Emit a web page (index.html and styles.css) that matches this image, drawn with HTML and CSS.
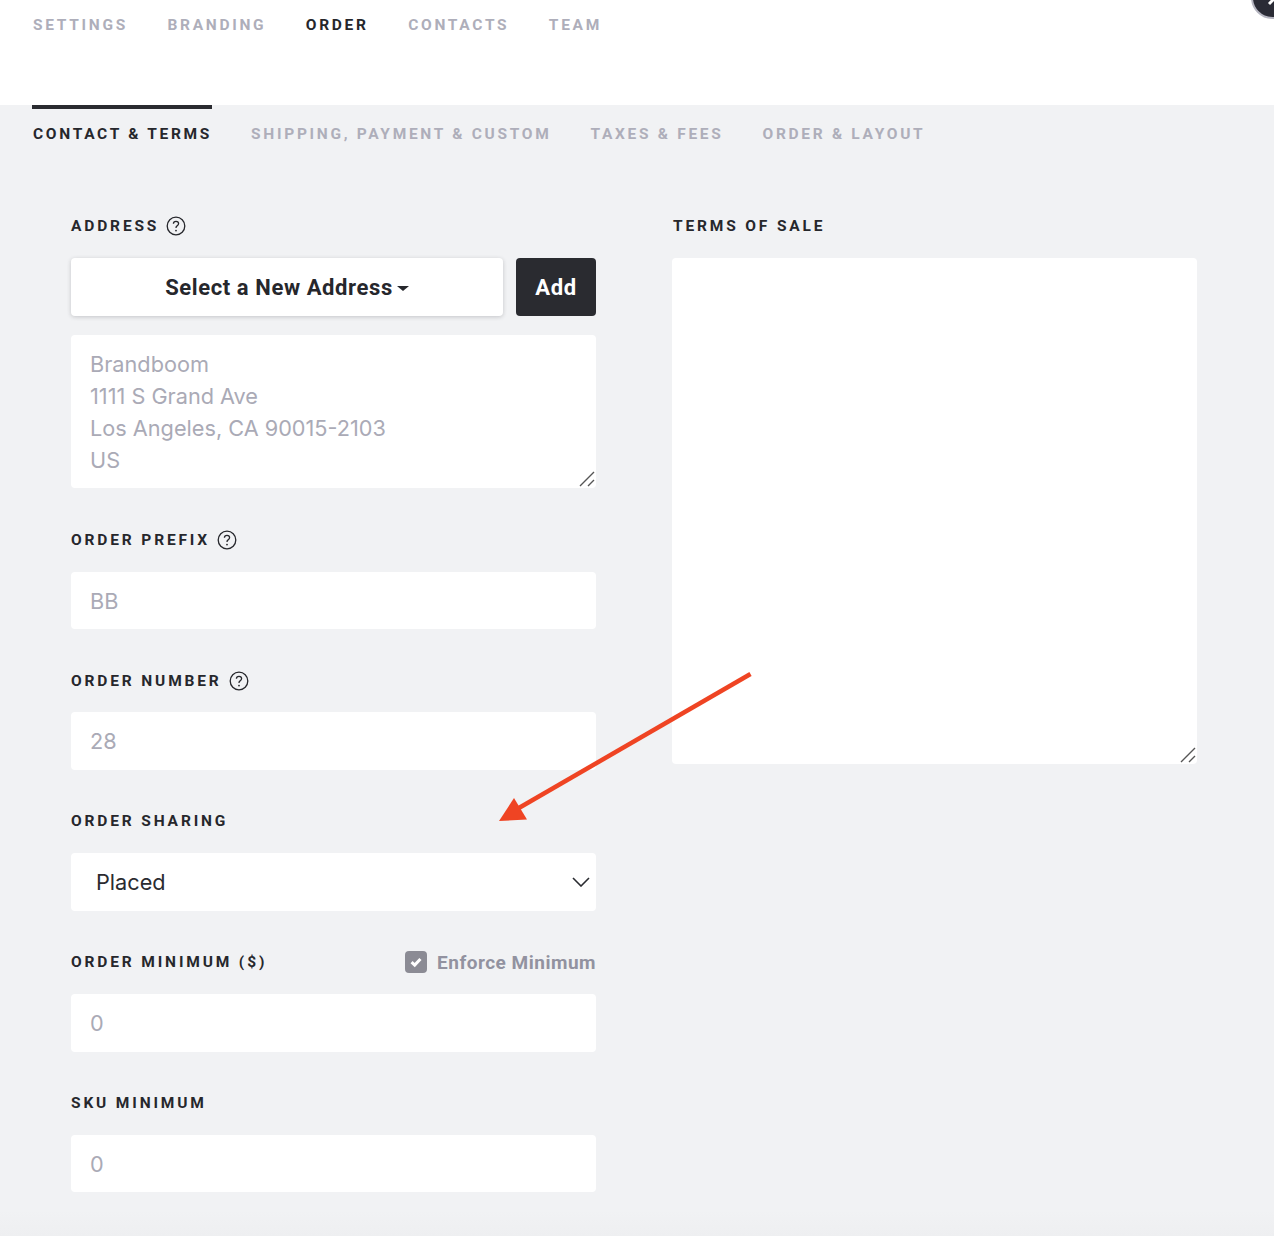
FILE: index.html
```html
<!DOCTYPE html>
<html lang="en">
<head>
<meta charset="utf-8">
<title>Order settings</title>
<link rel="stylesheet" href="styles.css">
</head>
<body>
<header class="top">
  <nav class="tabs main-tabs">
    <a class="tab">SETTINGS</a>
    <a class="tab">BRANDING</a>
    <a class="tab on">ORDER</a>
    <a class="tab">CONTACTS</a>
    <a class="tab">TEAM</a>
  </nav>
</header>
<nav class="tabs sub-tabs">
  <a class="tab on bar">CONTACT &amp; TERMS</a>
  <a class="tab">SHIPPING, PAYMENT &amp; CUSTOM</a>
  <a class="tab">TAXES &amp; FEES</a>
  <a class="tab">ORDER &amp; LAYOUT</a>
</nav>
<main class="form">
  <section class="col">
    <div class="label-row first"><span class="label">ADDRESS</span>
      <svg class="help" viewBox="0 0 20 20"><circle cx="10" cy="10" r="8.8"/><path d="M7.4 7.8c0-1.5 1.1-2.5 2.6-2.5s2.6 1 2.6 2.3c0 1.1-.6 1.7-1.5 2.3-.8.5-1.1 1-1.1 2"/><circle class="dot" cx="10" cy="14.6" r=".9"/></svg>
    </div>
    <div class="address-actions">
      <button class="picker">Select a New Address<i class="caret"></i></button>
      <button class="add">Add</button>
    </div>
    <div class="box address">Brandboom<br>1111 S Grand Ave<br>Los Angeles, CA 90015-2103<br>US
      <svg class="grip" viewBox="0 0 16 16"><path d="M1 15 15 1M9 15l6-6"/></svg>
    </div>
    <div class="label-row wide-top"><span class="label">ORDER PREFIX</span>
      <svg class="help" viewBox="0 0 20 20"><circle cx="10" cy="10" r="8.8"/><path d="M7.4 7.8c0-1.5 1.1-2.5 2.6-2.5s2.6 1 2.6 2.3c0 1.1-.6 1.7-1.5 2.3-.8.5-1.1 1-1.1 2"/><circle class="dot" cx="10" cy="14.6" r=".9"/></svg>
    </div>
    <div class="box field short">BB</div>
    <div class="label-row wide-top tight-bottom"><span class="label">ORDER NUMBER</span>
      <svg class="help" viewBox="0 0 20 20"><circle cx="10" cy="10" r="8.8"/><path d="M7.4 7.8c0-1.5 1.1-2.5 2.6-2.5s2.6 1 2.6 2.3c0 1.1-.6 1.7-1.5 2.3-.8.5-1.1 1-1.1 2"/><circle class="dot" cx="10" cy="14.6" r=".9"/></svg>
    </div>
    <div class="box field">28</div>
    <div class="label-row"><span class="label">ORDER SHARING</span></div>
    <div class="box field select">Placed
      <svg class="chev" viewBox="0 0 18 10"><path d="M1 1l8 8 8-8"/></svg>
    </div>
    <div class="label-row spread"><span class="label">ORDER MINIMUM ($)</span>
      <span class="check-wrap">
        <span class="check"><svg viewBox="0 0 12 12"><path d="M2.2 6.200l2.700 2.500 4.900-5.200"/></svg></span>
        Enforce Minimum
      </span>
    </div>
    <div class="box field">0</div>
    <div class="label-row"><span class="label">SKU MINIMUM</span></div>
    <div class="box field short">0</div>
  </section>
  <section class="col">
    <div class="label-row first"><span class="label terms-label">TERMS OF SALE</span></div>
    <div class="box terms">
      <svg class="grip" viewBox="0 0 16 16"><path d="M1 15 15 1M9 15l6-6"/></svg>
    </div>
  </section>
</main>
<div class="fade"></div>
<div class="fab"><svg viewBox="0 0 40 40"><path d="M16 26l6-6"/></svg></div>
<svg class="arrow" viewBox="0 0 1274 1236"><path class="shaft" d="M750.500 674 518 808.500"/><path class="head" d="M514 798 499 821 527 819.500z"/></svg>
</body>
</html>
```
FILE: styles.css
```css
* { box-sizing: border-box; }
html, body { margin: 0; padding: 0; }
body {
  position: relative;
  height: 1236px;
  overflow: hidden;
  background: #f1f2f4;
  font-family: "Roboto", "Noto Sans", sans-serif;
  color: #2a2b30;
}
.top { height: 105px; background: #fff; }
.tabs { display: flex; padding-left: 33px; }
.main-tabs { gap: 39.5px; padding-top: 16px; line-height: 19px; }
.sub-tabs { gap: 39px; line-height: 19px; }
.tab {
  font-size: 15.5px;
  font-weight: 700;
  letter-spacing: 2.7px;
  color: #aeaeba;
  white-space: nowrap;
}
.tab.on { color: #26272c; }
.sub-tabs .tab { padding-top: 20px; }
.tab.bar { position: relative; }
.tab.bar::before {
  content: "";
  position: absolute;
  left: -1px; right: 0; top: 0;
  height: 4px;
  background: #2a2b30;
}
.form { display: flex; gap: 76px; padding: 0 0 0 71px; }
.col { width: 525px; display: flex; flex-direction: column; }
.label-row {
  display: flex; align-items: center; gap: 7px;
  height: 22px; padding-top: 2px; margin-top: 39px; margin-bottom: 22px;
}
.label-row.first { margin-top: 70px; margin-bottom: 22px; }
.label-row.wide-top { margin-top: 40px; }
.label-row.tight-bottom { margin-bottom: 21px; }
.label-row.spread { justify-content: space-between; }
.label {
  font-size: 15.5px; font-weight: 700; letter-spacing: 2.85px;
  color: #26272c; white-space: nowrap;
}
.terms-label { margin-left: 1px; }
.help { width: 20px; height: 20px; fill: none; stroke: #26272c; stroke-width: 1.3; }
.help .dot { fill: #26272c; stroke: none; }
.address-actions { display: flex; gap: 13px; height: 58px; }
.picker, .add {
  border: 0; border-radius: 4px;
  font-family: "Roboto", sans-serif; font-size: 22px; font-weight: 700;
  letter-spacing: .6px;
  padding: 0;
}
.picker {
  width: 432px; background: #fff; color: #26272c;
  box-shadow: 0 1px 4px rgba(40, 40, 50, .22);
}
.caret {
  display: inline-block; margin-left: 4px; vertical-align: middle;
  border-left: 6px solid transparent; border-right: 6px solid transparent;
  border-top: 5px solid #26272c;
}
.add { width: 80px; background: #2a2b30; color: #fff; }
.box {
  position: relative;
  background: #fff; border-radius: 4px;
  font-family: "Inter", sans-serif; font-size: 21.7px; color: #aaaab6;
}
.address { height: 153px; margin-top: 19px; padding: 13px 19px; line-height: 32px; }
.field { height: 58px; padding: 0 19px; display: flex; align-items: center; }
.field.short { height: 57px; }
.select { color: #2a2b30; padding-left: 25px; justify-content: space-between; padding-right: 6px; }
.chev { width: 18px; height: 10px; fill: none; stroke: #2a2b30; stroke-width: 1.6; }
.grip { position: absolute; right: 1px; bottom: 1px; width: 16px; height: 16px; fill: none; stroke: #555; stroke-width: 1.4; }
.terms { height: 506px; }
.check-wrap {
  display: flex; align-items: center; gap: 10px;
  font-size: 19px; font-weight: 700; color: #9292a0; letter-spacing: .5px;
}
.check { width: 22px; height: 22px; border-radius: 4px; background: #8b8b94; display: flex; align-items: center; justify-content: center; }
.check svg { width: 14px; height: 14px; fill: none; stroke: #fff; stroke-width: 2.6; }
.fade {
  position: absolute; left: 0; right: 0; bottom: 0; height: 26px;
  background: linear-gradient(#f1f2f4, #eeeff1);
}
.fab {
  position: absolute; left: 1251px; top: -24px;
  width: 43px; height: 43px; border-radius: 50%;
  background: #2a2b35; border: 2px solid #b5b5c0;
}
.fab svg { width: 40px; height: 40px; fill: none; stroke: #fff; stroke-width: 3; }
.arrow { position: absolute; left: 0; top: 0; width: 1274px; height: 1236px; pointer-events: none; }
.shaft { fill: none; stroke: #ef4423; stroke-width: 4.500; }
.head { fill: #ef4423; }
```
